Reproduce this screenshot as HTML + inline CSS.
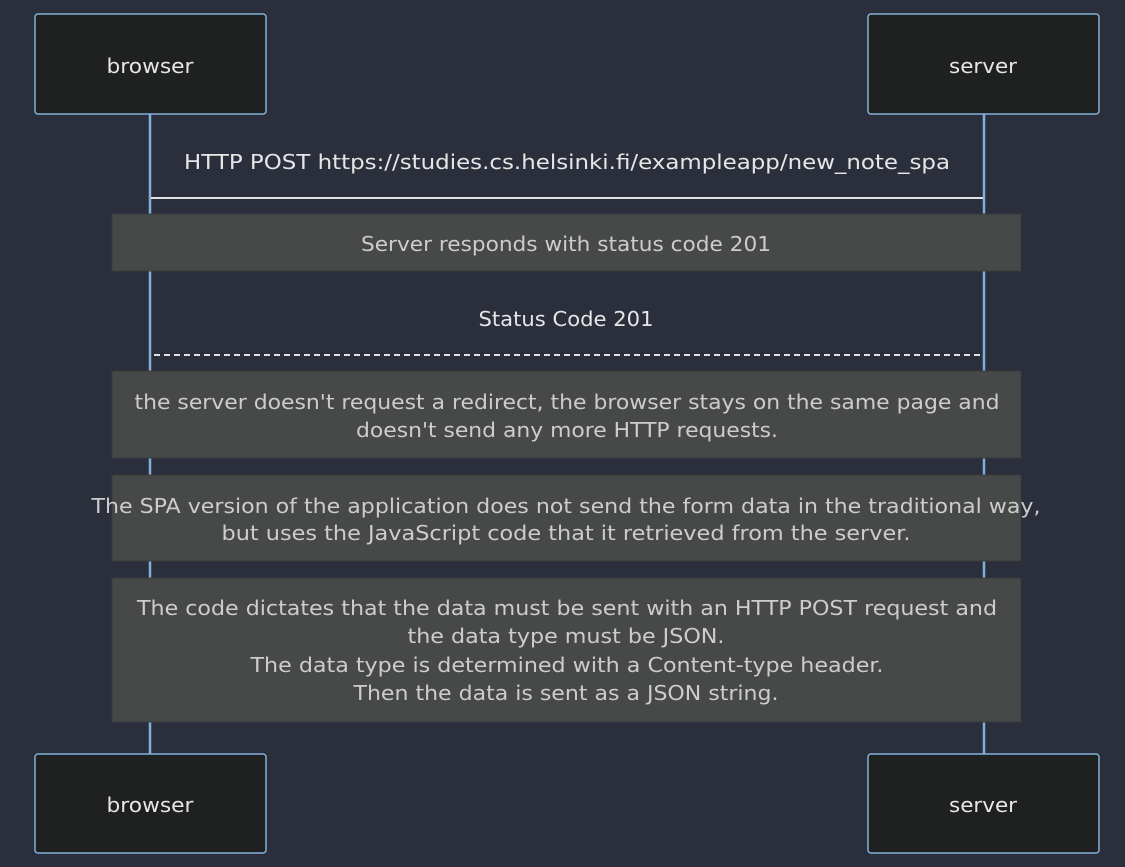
<!DOCTYPE html>
<html><head><meta charset="utf-8"><style>
html,body{margin:0;padding:0;background:#2a2f3b;}
svg{display:block}
text{font-family:"DejaVu Sans","Liberation Sans",sans-serif;font-size:20px;dominant-baseline:central;text-anchor:middle}
.m{fill:#e6e6e6}
.n{fill:#cccccc}
</style></head><body>
<svg width="1125" height="867" viewBox="0 0 1125 867" xmlns="http://www.w3.org/2000/svg">
<rect width="1125" height="867" fill="#2a2f3b"/>
<line x1="150" y1="114" x2="150" y2="754" stroke="#81b1db" stroke-width="2.5"/>
<line x1="984" y1="114" x2="984" y2="754" stroke="#81b1db" stroke-width="2.5"/>
<g fill="#1f2020" stroke="#81b1db" stroke-width="1.5">
<rect x="35" y="14" width="231" height="100" rx="3"/>
<rect x="868" y="14" width="231" height="100" rx="3"/>
<rect x="35" y="754" width="231" height="99" rx="3"/>
<rect x="868" y="754" width="231" height="99" rx="3"/>
</g>
<text class="m" x="150" y="66" textLength="87" lengthAdjust="spacingAndGlyphs">browser</text>
<text class="m" x="983" y="66" textLength="68" lengthAdjust="spacingAndGlyphs">server</text>
<text class="m" x="150" y="805" textLength="87" lengthAdjust="spacingAndGlyphs">browser</text>
<text class="m" x="983" y="805" textLength="68" lengthAdjust="spacingAndGlyphs">server</text>

<text class="m" x="567" y="162" textLength="766" lengthAdjust="spacingAndGlyphs">HTTP POST https://studies.cs.helsinki.fi/exampleapp/new_note_spa</text>
<line x1="151" y1="198" x2="983" y2="198" stroke="#e0e0e0" stroke-width="2"/>

<g fill="#474949" stroke="#3a3a3a" stroke-width="1">
<rect x="112" y="214" width="909" height="57"/>
<rect x="112" y="371" width="909" height="87"/>
<rect x="112" y="475" width="909" height="86"/>
<rect x="112" y="578" width="909" height="144"/>
</g>
<text class="n" x="566" y="244" textLength="410" lengthAdjust="spacingAndGlyphs">Server responds with status code 201</text>

<text class="m" x="566" y="319" textLength="175" lengthAdjust="spacingAndGlyphs">Status Code 201</text>
<line x1="154" y1="355" x2="983" y2="355" stroke="#e0e0e0" stroke-width="2" stroke-dasharray="6,4"/>

<text class="n" x="567" y="402" textLength="865" lengthAdjust="spacingAndGlyphs">the server doesn't request a redirect, the browser stays on the same page and</text>
<text class="n" x="567" y="430" textLength="422" lengthAdjust="spacingAndGlyphs">doesn't send any more HTTP requests.</text>

<text class="n" x="566" y="506" textLength="949" lengthAdjust="spacingAndGlyphs">The SPA version of the application does not send the form data in the traditional way,</text>
<text class="n" x="566" y="533" textLength="689" lengthAdjust="spacingAndGlyphs">but uses the JavaScript code that it retrieved from the server.</text>

<text class="n" x="567" y="608" textLength="860" lengthAdjust="spacingAndGlyphs">The code dictates that the data must be sent with an HTTP POST request and</text>
<text class="n" x="566" y="636" textLength="317" lengthAdjust="spacingAndGlyphs">the data type must be JSON.</text>
<text class="n" x="567" y="665" textLength="633" lengthAdjust="spacingAndGlyphs">The data type is determined with a Content-type header.</text>
<text class="n" x="566" y="693" textLength="425" lengthAdjust="spacingAndGlyphs">Then the data is sent as a JSON string.</text>
</svg>
</body></html>
